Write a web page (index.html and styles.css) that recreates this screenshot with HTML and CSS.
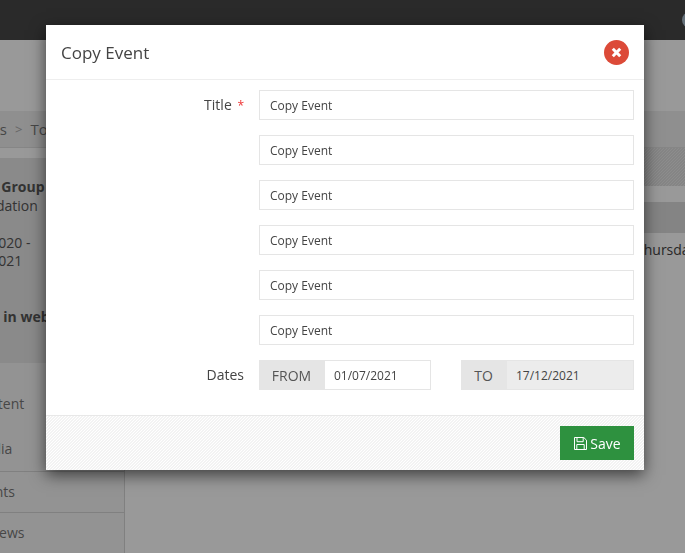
FILE: index.html
```html
<!DOCTYPE html>
<html lang="en">
<head>
    <meta charset="UTF-8">
    <meta name="viewport" content="width=device-width, initial-scale=1.0">
    <title>Copy Event</title>
    <link rel="stylesheet" href="styles.css">
</head>
<body>
    <div class="page">
        <header class="topbar">
            <span class="avatar"></span>
        </header>
        <div class="subhead"></div>
        <div class="breadcrumb">
            <span>Events</span>
            <span class="crumb-sep">&gt;</span>
            <span>Tools</span>
        </div>
        <div class="main">
            <aside class="sidebar">
                <div class="card">
                    <p class="card-title">Project Group</p>
                    <p>Consolidation</p>
                    <p class="card-link">Edit</p>
                    <p class="card-dates">01/07/2020 -<br>17/12/2021</p>
                    <p class="card-note">Regular in website</p>
                </div>
                <nav class="side-nav">
                    <a href="#" class="nav-first">Content</a>
                    <a href="#" class="nav-second">Media</a>
                    <a href="#" class="line">Events</a>
                    <a href="#" class="line">Reviews</a>
                </nav>
            </aside>
            <section class="content">
                <div class="stripes"></div>
                <div class="days-head"></div>
                <div class="days">
                    <span>Sunday</span>
                    <span>Monday</span>
                    <span>Tuesday</span>
                    <span>Wednesday</span>
                    <span>Thursday</span>
                </div>
            </section>
        </div>
    </div>

    <div class="overlay"></div>

    <div class="modal">
        <div class="modal-header">
            <h2>Copy Event</h2>
            <button type="button" class="close-btn" aria-label="Close">
                <svg width="11" height="11" viewBox="0 0 11 11"><path d="M1.8 1.8l7.4 7.4M9.2 1.8l-7.4 7.4" fill="none" stroke="#fff" stroke-width="3"/></svg>
            </button>
        </div>
        <form class="modal-body">
            <label class="field-label">Title <span class="required">*</span></label>
            <input type="text" class="text-input" value="Copy Event">
            <input type="text" class="text-input slot" value="Copy Event">
            <input type="text" class="text-input slot" value="Copy Event">
            <input type="text" class="text-input slot" value="Copy Event">
            <input type="text" class="text-input slot" value="Copy Event">
            <input type="text" class="text-input slot" value="Copy Event">

            <label class="field-label">Dates</label>
            <div class="date-range">
                <div class="date-group">
                    <span class="addon addon-from">FROM</span>
                    <input type="text" class="date-input" value="01/07/2021">
                </div>
                <div class="date-group">
                    <span class="addon addon-to">TO</span>
                    <input type="text" class="date-input" value="17/12/2021" disabled>
                </div>
            </div>
        </form>
        <div class="modal-footer">
            <button type="button" class="save-btn">
                <svg width="13" height="13" viewBox="0 0 13 13"><path d="M.5.5h9.3l2.7 2.7v9.3H.5zM3 .5v4.2h6.2V.5M2.8 12.5V7.5h7.4v5" fill="none" stroke="#fff" stroke-width="1"/></svg>
                Save
            </button>
        </div>
    </div>
</body>
</html>
```

FILE: styles.css
```css
html, body {
    height: 100%;
}
body {
    font-family: "Open Sans", sans-serif;
    margin: 0;
    padding: 0;
    background-color: #fff;
    color: #444;
    overflow: hidden;
}
.page {
    height: 553px;
    overflow: hidden;
}
.topbar {
    height: 40px;
    background-color: #464646;
    display: flex;
    justify-content: flex-end;
    align-items: center;
}
.avatar {
    flex: none;
    width: 16px;
    height: 16px;
    border-radius: 50%;
    background-color: #a9bccb;
    margin-right: -13px;
}
.subhead {
    height: 71px;
    background-color: #fff;
}
.breadcrumb {
    height: 36px;
    background-color: #eee;
    border-bottom: 1px solid #dfdfdf;
    display: flex;
    align-items: center;
    gap: 8px;
    font-size: 15px;
    color: #777;
}
.breadcrumb span:first-child {
    margin-left: -39px;
}
.crumb-sep {
    font-size: 13px;
    color: #aaa;
}
.main {
    display: flex;
}
.sidebar {
    flex: none;
    width: 124px;
    height: 405px;
    border-right: 1px solid #d5d5d5;
    padding-top: 10px;
}
.card {
    height: 205px;
    background-color: #e6e6e6;
    box-sizing: border-box;
    padding-top: 19px;
    font-size: 14px;
    line-height: 19px;
    margin-left: -52px;
    color: #555;
    white-space: nowrap;
}
.card p {
    margin: 0;
}
.card-title {
    font-weight: 700;
}
.card-link {
    color: #39a0a8;
}
.card-dates {
    line-height: 18px;
}
.card .card-note {
    margin: 37px 0 0 -2px;
    font-weight: 700;
}
.side-nav {
    height: 190px;
    box-sizing: border-box;
    padding-top: 19px;
    font-size: 14px;
    background-color: #f6f6f6;
}
.side-nav a {
    display: block;
    box-sizing: border-box;
    height: 41px;
    line-height: 40px;
    color: #777;
    text-decoration: none;
    text-indent: -28px;
    white-space: nowrap;
}
.side-nav .nav-first {
    height: 44px;
    line-height: 44px;
}
.side-nav .nav-second {
    height: 45px;
    line-height: 45px;
}
.side-nav .line {
    border-top: 1px solid #d5d5d5;
}
.content {
    flex: 1;
    min-width: 0;
}
.stripes {
    height: 38px;
    background: repeating-linear-gradient(135deg, #dedede 0, #dedede 1px, #ececec 1px, #ececec 2.12px);
}
.days-head {
    height: 31px;
    margin-top: 16px;
    background-color: #dcdcdc;
}
.days {
    display: flex;
    font-size: 14px;
    line-height: 34px;
    white-space: nowrap;
}
.days span {
    flex: 0 0 125px;
    box-sizing: border-box;
    padding-left: 11px;
}

.overlay {
    position: fixed;
    top: 0;
    left: 0;
    right: 0;
    bottom: 0;
    background-color: rgba(0, 0, 0, 0.4);
}
.modal {
    position: absolute;
    top: 25px;
    left: 46px;
    width: 598px;
    background: #fff;
    box-shadow: 0 5px 15px rgba(0, 0, 0, 0.6);
    transform: translateZ(0);
}
.modal-header {
    height: 55px;
    box-sizing: border-box;
    border-bottom: 1px solid #eee;
    padding: 0 15px;
    display: flex;
    justify-content: space-between;
    align-items: center;
}
.modal-header h2 {
    margin: 0;
    font-size: 17px;
    font-weight: 400;
    color: #444;
}
.close-btn {
    width: 25px;
    height: 25px;
    padding: 0;
    border: none;
    border-radius: 50%;
    background-color: #dc4a38;
    display: flex;
    align-items: center;
    justify-content: center;
    cursor: pointer;
}
.modal-body {
    display: grid;
    grid-template-columns: 198px 375px;
    column-gap: 15px;
    row-gap: 15px;
    padding: 10px 10px 25px 0;
}
.field-label {
    height: 30px;
    text-align: right;
    font-size: 14px;
    line-height: 30px;
    color: #444;
}
.required {
    font-size: 12px;
    line-height: 1;
    color: #e33;
    margin-left: 2px;
}
.text-input,
.date-input {
    height: 30px;
    box-sizing: border-box;
    border: 1px solid #e5e5e5;
    padding: 0 10px;
    font-family: "Open Sans", sans-serif;
    font-size: 12px;
    color: #444;
    background: #fff;
    outline: none;
    min-width: 0;
}
.slot {
    grid-column: 2;
}
.date-range {
    display: grid;
    grid-template-columns: 172px 173px;
    column-gap: 30px;
}
.date-group {
    display: flex;
}
.addon {
    flex: none;
    height: 30px;
    box-sizing: border-box;
    background-color: #e5e5e5;
    color: #555;
    font-size: 14px;
    line-height: 32px;
    text-align: center;
}
.addon-from {
    width: 65px;
}
.addon-to {
    width: 45px;
}
.date-input {
    flex: 1;
    width: 100%;
    padding: 0 9px;
}
.date-input:disabled {
    background-color: #ececec;
    color: #444;
}
.modal-footer {
    height: 55px;
    box-sizing: border-box;
    border-top: 1px solid #e8e8e8;
    padding: 10px 10px 0 0;
    display: flex;
    justify-content: flex-end;
    align-items: flex-start;
    background: repeating-linear-gradient(135deg, #f3f3f3 0, #f3f3f3 1px, #fff 1px, #fff 2.12px);
}
.save-btn {
    width: 74px;
    height: 34px;
    padding: 0 0 0 1px;
    border: none;
    background-color: #2e913f;
    color: #fff;
    font-family: "Open Sans", sans-serif;
    font-size: 14px;
    display: flex;
    align-items: center;
    justify-content: center;
    gap: 3px;
    cursor: pointer;
}
```
